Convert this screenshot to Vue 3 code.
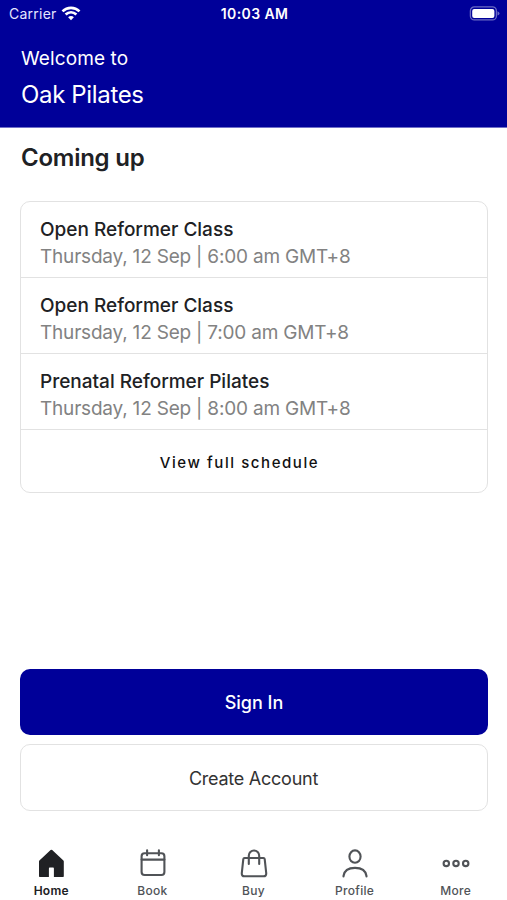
<script setup>
const classes = [
  { name: 'Open Reformer Class', time: 'Thursday, 12 Sep | 6:00 am GMT+8' },
  { name: 'Open Reformer Class', time: 'Thursday, 12 Sep | 7:00 am GMT+8' },
  { name: 'Prenatal Reformer Pilates', time: 'Thursday, 12 Sep | 8:00 am GMT+8' },
]
</script>

<template>
  <div class="screen">
    <header class="header">
      <div class="status">
        <div class="carrier">
          <span>Carrier</span>
          <svg width="20" height="16" viewBox="0 0 20 16" fill="none" stroke="#fff" stroke-width="2.7">
            <path d="M1.5 5.4C6.3 .8 13.7 .8 18.5 5.4" />
            <path d="M4.6 8.6C7.8 5.6 12.2 5.6 15.4 8.6" />
            <path d="M10 14.2 7.1 11.2C8.7 9.7 11.3 9.7 12.9 11.2Z" fill="#fff" stroke="none" />
          </svg>
        </div>
        <span class="clock">10:03 AM</span>
        <div class="power">
          <svg width="32" height="16" viewBox="0 0 32 16">
            <rect x="2.4" y=".9" width="26" height="13" rx="4" fill="none" stroke="#fff" stroke-opacity=".42" stroke-width="1.3" />
            <rect x="4.2" y="3" width="22.2" height="8.9" rx="2" fill="#fff" />
            <path d="M29.5 5.2Q31.5 5.9 31.5 7.4T29.5 9.6Z" fill="#fff" fill-opacity=".42" />
          </svg>
        </div>
      </div>
      <div class="welcome">Welcome to</div>
      <h1 class="studio">Oak Pilates</h1>
    </header>

    <main class="content">
      <h2 class="heading">Coming up</h2>
      <section class="card">
        <div v-for="(item, i) in classes" :key="i" class="row">
          <div class="name">{{ item.name }}</div>
          <div class="time">{{ item.time }}</div>
        </div>
        <button class="schedule">View full schedule</button>
      </section>
      <div class="actions">
        <button class="btn primary">Sign In</button>
        <button class="btn secondary">Create Account</button>
      </div>
    </main>

    <nav class="tabs">
      <a class="tab active">
        <svg class="icon" viewBox="0 0 32 32">
          <path d="M16.4 2.7q.4 0 .8.4L28.4 13.4q.4.4.4 1v14.8q0 .7-.7.7h-9.2v-8.5q0-.8-.8-.8h-3.4q-.8 0-.8.8v8.5H4.700q-.7 0-.7-.7V14.400q0-.6.4-1L15.600 3.100q.4-.4.8-.4Z" fill="currentColor" />
        </svg>
        <span>Home</span>
      </a>
      <a class="tab">
        <svg class="icon line" viewBox="0 0 32 32">
          <rect x="5.6" y="6.2" width="22.8" height="21.8" rx="3" />
          <path d="M5.6 12.6h22.800M11.100 3.300v5M22.900 3.300v5" />
        </svg>
        <span>Book</span>
      </a>
      <a class="tab">
        <svg class="icon line" viewBox="0 0 32 32">
          <path d="M6.500 11h19q1 0 1.200 1.200L28.200 26q.3 3.300-2.700 3.300h-19q-3 0-2.700-3.300l1.500-13.800Q5.500 11 6.500 11Z" />
          <path d="M10.800 17V8.700a5.200 5.200 0 0 1 10.400 0V17" />
        </svg>
        <span>Buy</span>
      </a>
      <a class="tab">
        <svg class="icon line" viewBox="0 0 32 32">
          <ellipse cx="16" cy="9.600" rx="5.600" ry="6.200" />
          <path d="M4.500 29.500V29C5.300 23.300 10 20.900 16 20.900S26.700 23.300 27.500 29v.5" />
        </svg>
        <span>Profile</span>
      </a>
      <a class="tab">
        <svg class="icon line" viewBox="0 0 32 32">
          <circle cx="6.300" cy="16.400" r="2.700" />
          <circle cx="16" cy="16.400" r="2.700" />
          <circle cx="25.700" cy="16.400" r="2.700" />
        </svg>
        <span>More</span>
      </a>
    </nav>
  </div>
</template>

<style>
body {
  margin: 0;
  background: #fff;
}
</style>

<style scoped>
.screen {
  display: flex;
  flex-direction: column;
  width: 507px;
  height: 900px;
  overflow: hidden;
  font-family: Inter, "Liberation Sans", sans-serif;
  color: #202124;
  background: #fff;
}
.header {
  flex: none;
  box-sizing: border-box;
  height: 128px;
  border-bottom: 1px solid #7070c8;
  color: #fff;
  background: #000099;
}
.status {
  display: grid;
  grid-template-columns: 1fr auto 1fr;
  height: 28px;
  align-items: center;
  padding: 0 7px 0 9px;
  font-size: 14px;
  line-height: 28px;
}
.carrier {
  display: flex;
  align-items: center;
  gap: 4px;
  letter-spacing: 0.25px;
  color: #e6e6ff;
}
.clock {
  font-weight: 600;
  letter-spacing: 0.4px;
}
.power {
  display: flex;
  justify-content: flex-end;
}
.welcome {
  margin: 18px 0 0 21px;
  font-size: 19px;
  line-height: 26px;
  letter-spacing: 0.1px;
}
.studio {
  margin: 6px 0 0 21px;
  font-size: 24px;
  font-weight: 400;
  line-height: 33px;
  letter-spacing: -0.35px;
}
.content {
  flex: 1;
  display: flex;
  flex-direction: column;
  padding: 14px 19px 0 20px;
}
.heading {
  margin: 0 0 27px 1px;
  font-size: 24px;
  font-weight: 600;
  line-height: 32px;
  letter-spacing: -0.25px;
}
.card {
  box-sizing: border-box;
  height: 292px;
  border: 1px solid #e2e2e2;
  border-radius: 10px;
}
.row {
  box-sizing: border-box;
  height: 76px;
  padding: 14px 19px 0;
  border-bottom: 1px solid #e2e2e2;
  line-height: 27px;
  white-space: nowrap;
}
.name {
  font-size: 19px;
  font-weight: 500;
}
.time {
  font-size: 19px;
  letter-spacing: -0.2px;
  color: #828282;
}
button {
  font-family: inherit;
  cursor: pointer;
}
.schedule {
  display: block;
  width: 100%;
  height: 64px;
  padding: 0 29px 0 0;
  border: 0;
  background: none;
  color: #111;
  font-size: 15px;
  font-weight: 500;
  letter-spacing: 1.57px;
}
.actions {
  display: flex;
  flex-direction: column;
  gap: 9px;
  margin-top: 176px;
}
.btn {
  box-sizing: border-box;
  padding: 0;
  border: 0;
  border-radius: 10px;
  font-size: 18px;
}
.primary {
  height: 66px;
  color: #fff;
  background: #000099;
  font-weight: 500;
}
.secondary {
  height: 67px;
  padding: 1px 1px 0 0;
  border: 1px solid #e2e2e2;
  color: #333;
  background: #fff;
  letter-spacing: -0.25px;
}
.tabs {
  flex: none;
  display: grid;
  grid-template-columns: repeat(5, 101.1px);
  justify-content: center;
  height: 53px;
}
.tab {
  display: flex;
  flex-direction: column;
  align-items: center;
  gap: 4px;
  color: #505357;
  font-size: 12px;
  font-weight: 500;
  line-height: 16px;
  letter-spacing: 0.3px;
}
.active {
  color: #202124;
  font-weight: 600;
}
.icon {
  width: 32px;
  height: 32px;
}
.line {
  fill: none;
  stroke: currentColor;
  stroke-width: 2.1;
  stroke-linecap: round;
  stroke-linejoin: round;
}
</style>
